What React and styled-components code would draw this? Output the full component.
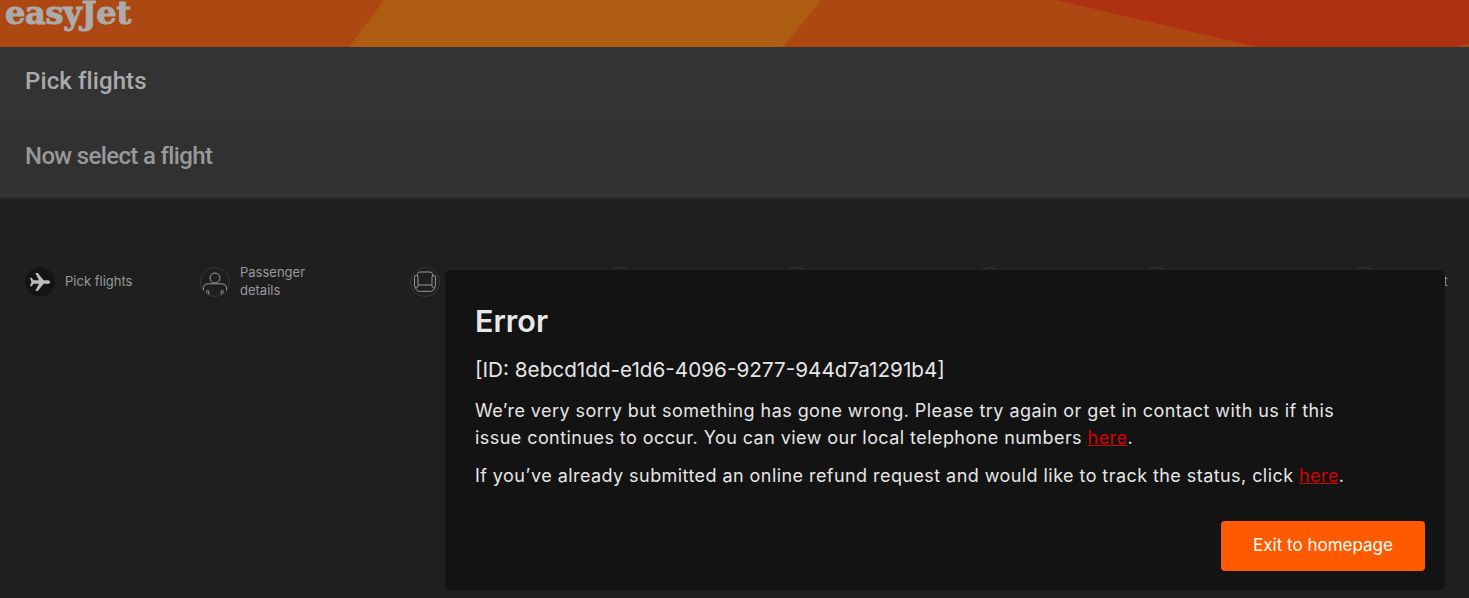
import React from "react";
import styled, { createGlobalStyle } from "styled-components";

const Global = createGlobalStyle`
  html, body { margin: 0; padding: 0; height: 100%; background: #1f1f1f; overflow: hidden; }
  #root { height: 100%; }
`;
const Page = styled.div`
  position: relative; width: 1469px; height: 598px; overflow: hidden; background: #1f1f1f;
  font-family: "Inter", "Liberation Sans", sans-serif;
`;
const Header = styled.header`
  position: relative; height: 47px; background: #ae4812; overflow: hidden;
`;
const HeaderArt = styled.svg`
  position: absolute; inset: 0; width: 100%; height: 100%;
`;
const Logo = styled.span`
  position: relative; display: block; padding-left: 5px;
  font: 700 32px/26px "DejaVu Serif", serif; color: #ababab;
  -webkit-text-stroke: 1px #ababab; letter-spacing: -0.3px;
`;
const TitleBar = styled.div`
  height: ${p => p.$h}px; box-sizing: border-box; padding: 0 0 ${p => p.$pb}px 25px; display: flex; align-items: center;
  background: ${p => p.$bg};
  font-family: "Roboto", sans-serif; font-weight: 500; font-size: 24px; letter-spacing: ${p => p.$track}px; color: ${p => p.$color};
`;
const Shadow = styled.div`
  height: 7px; background: linear-gradient(#3c3c3c, #333 30%, #1f1f1f);
`;
const Stepper = styled.nav`
  display: flex; padding: 62px 0 0 25px;
`;
const Step = styled.div`
  display: flex; align-items: center; gap: 10px; width: ${p => p.$w}px; flex: none;
`;
const Circle = styled.span`
  width: 30px; height: 30px; flex: none; box-sizing: border-box; border-radius: 50%;
  display: flex; align-items: center; justify-content: center; overflow: hidden;
  border: 1px solid ${p => p.$active ? "#141414" : "#383838"};
  background: ${p => p.$active ? "#141414" : "transparent"};
  svg { flex: none; }
`;
const StepLabel = styled.span`
  font-size: 13px; line-height: 18px; color: #999; width: 75px; margin-bottom: 2px;
  letter-spacing: ${p => p.$track || 0}px;
`;
const Modal = styled.section`
  position: absolute; left: 445px; top: 270px; width: 1000px; height: 320px; box-sizing: border-box;
  padding: 30px 20px 19px 30px; background: #131313; border-radius: 6px; color: #e6e6e6;
  display: flex; flex-direction: column;
`;
const Title = styled.h2`
  margin: 0; font-size: 30.5px; line-height: 42px; font-weight: 600; color: #e8e8e8;
`;
const ErrorId = styled.p`
  margin: 11px 0 0; font-size: 20.7px; line-height: 34px; font-weight: 400;
`;
const Body = styled.p`
  margin: ${p => p.$gap}px 0 0; font-size: 18px; line-height: 27px; letter-spacing: 0.435px; max-width: 880px;
`;
const Link = styled.a`
  color: #d40000; text-decoration: underline;
`;
const Actions = styled.div`
  margin-top: auto; display: flex; justify-content: flex-end;
`;
const Button = styled.button`
  width: 204px; height: 50px; border: 0; border-radius: 4px; background: #ff5a00; color: #fff;
  padding: 0 0 2px; font: 400 17px "Inter", sans-serif;
`;

const Plane = () => (
  <svg width="30" height="30" viewBox="0 0 30 30" fill="#bdbdbd">
    <path d="M5 10.8 H6.6 L8.6 13.3 H14 L10.3 6 H12.8 L18.6 13.2 H22.5 C24.2 13.2 25.2 14 25.2 15 C25.2 16 24.2 16.8 22.5 16.8 H18.6 L12.8 24 H10.3 L14 16.7 H8.6 L6.6 19.2 H5 L6.4 15 Z" />
  </svg>
);
const Person = () => (
  <svg width="30" height="30" viewBox="0 0 30 30" fill="none" stroke="#999" strokeWidth="1">
    <circle cx="15" cy="11" r="5" />
    <path d="M3.5 27 V20.5 C3.5 18 6 16.8 9 16.8 H21 C24 16.8 26.5 18 26.5 20.5 V27" />
    <path d="M6.7 29 V24.5 C6.7 23 8.7 23 8.7 24.5 V29 M21.3 29 V24.5 C21.3 23 23.3 23 23.3 24.5 V29" />
  </svg>
);
const Seat = () => (
  <svg width="30" height="30" viewBox="0 0 30 30" fill="none" stroke="#999" strokeWidth="1">
    <path d="M7.5 9 V7.5 C7.5 5.8 8.5 5 10 5 H20 C21.5 5 22.5 5.8 22.5 7.5 V9" />
    <rect x="4.5" y="8.5" width="3.5" height="12" rx="1.7" />
    <rect x="22" y="8.5" width="3.5" height="12" rx="1.7" />
    <path d="M8 18 H22 M5.5 20.5 C6 23 7.5 24.3 9.5 24.3 H20.5 C22.5 24.3 24 23 24.5 20.5" />
  </svg>
);

const steps = [
  { w: 175, icon: <Plane />, active: true, label: "Pick flights" },
  { w: 210, icon: <Person />, label: "Passenger details" },
  { w: 195, icon: <Seat /> },
  { w: 177 },
  { w: 193 },
  { w: 167 },
  { w: 208 },
  { w: 110, label: "Payment", track: 0.7 },
];

export default function App() {
  return (
    <Page>
      <Global />
      <Header>
        <HeaderArt viewBox="0 0 1469 47" preserveAspectRatio="none">
          <polygon points="384,0 821,0 783,47 349,47" fill="#ae5c12" />
          <polygon points="1056,0 1469,0 1469,44 1457,47 1257,47" fill="#ae3112" />
        </HeaderArt>
        <Logo>easyJet</Logo>
      </Header>
      <TitleBar $h={71} $pb={3} $bg="#333" $color="#aaa" $track={0.1}>Pick flights</TitleBar>
      <TitleBar $h={76} $pb={0} $bg="#313131" $color="#999" $track={-0.65}>Now select a flight</TitleBar>
      <Shadow />
      <Stepper>
        {steps.map((s, i) => (
          <Step key={i} $w={s.w}>
            <Circle $active={s.active}>{s.icon}</Circle>
            {s.label && <StepLabel $track={s.track}>{s.label}</StepLabel>}
          </Step>
        ))}
      </Stepper>
      <Modal>
        <Title>Error</Title>
        <ErrorId>[ID: 8ebcd1dd-e1d6-4096-9277-944d7a1291b4]</ErrorId>
        <Body $gap={10}>
          We’re very sorry but something has gone wrong. Please try again or get in contact with us if this issue continues to occur. You can view our local telephone numbers <Link href="#">here</Link>.
        </Body>
        <Body $gap={11}>
          If you’ve already submitted an online refund request and would like to track the status, click <Link href="#">here</Link>.
        </Body>
        <Actions><Button>Exit to homepage</Button></Actions>
      </Modal>
    </Page>
  );
}
